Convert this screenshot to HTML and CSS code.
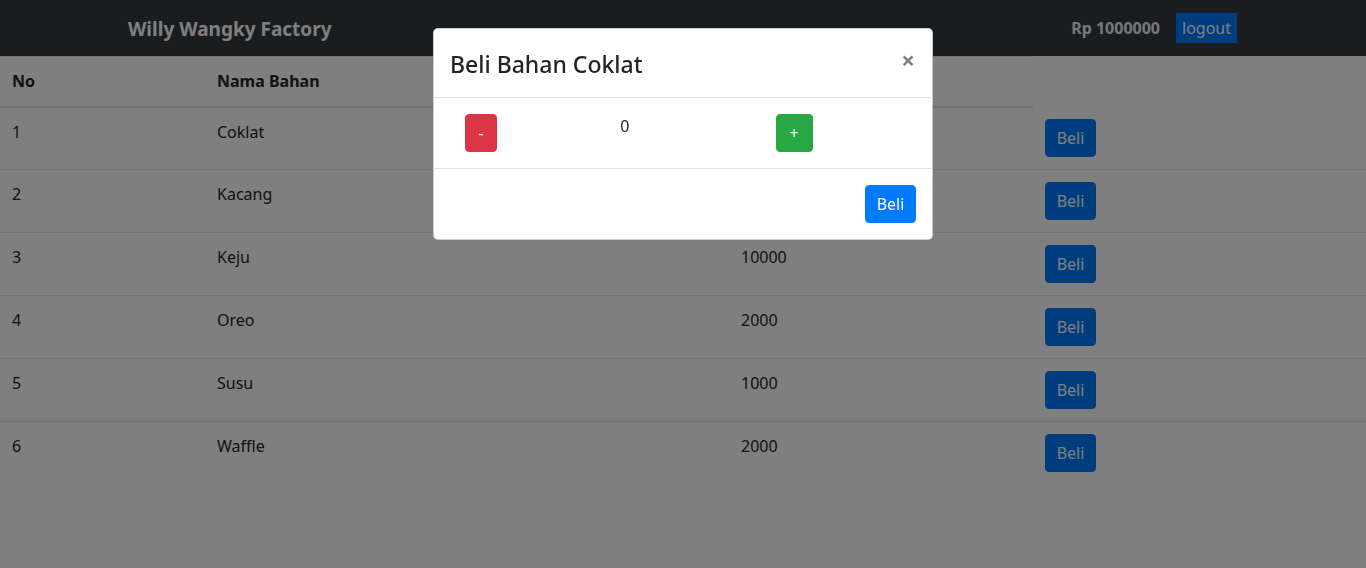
FILE: index.html
```html
<!DOCTYPE html>
<html lang="id">
<head>
<meta charset="utf-8">
<title>Willy Wangky Factory</title>
<link rel="stylesheet" href="styles.css">
</head>
<body>
<nav class="navbar">
  <a class="brand" href="#">Willy Wangky Factory</a>
  <div class="nav-right">
    <span class="saldo">Rp 1000000</span>
    <button class="btn-logout">logout</button>
  </div>
</nav>
<table class="table">
  <colgroup>
    <col class="c1"><col class="c2"><col class="c3"><col class="c4">
  </colgroup>
  <thead>
    <tr><th>No</th><th>Nama Bahan</th><th>Harga</th></tr>
  </thead>
  <tbody>
    <tr><td>1</td><td>Coklat</td><td>5000</td><td><button class="btn btn-primary">Beli</button></td></tr>
    <tr><td>2</td><td>Kacang</td><td>3000</td><td><button class="btn btn-primary">Beli</button></td></tr>
    <tr><td>3</td><td>Keju</td><td>10000</td><td><button class="btn btn-primary">Beli</button></td></tr>
    <tr><td>4</td><td>Oreo</td><td>2000</td><td><button class="btn btn-primary">Beli</button></td></tr>
    <tr><td>5</td><td>Susu</td><td>1000</td><td><button class="btn btn-primary">Beli</button></td></tr>
    <tr><td>6</td><td>Waffle</td><td>2000</td><td><button class="btn btn-primary">Beli</button></td></tr>
  </tbody>
</table>
<div class="backdrop"></div>
<div class="modal">
  <div class="modal-content">
    <div class="modal-header">
      <h4 class="modal-title">Beli Bahan Coklat</h4>
      <button class="close">&times;</button>
    </div>
    <div class="modal-body">
      <div class="row">
        <div class="col"><button class="btn btn-danger">-</button></div>
        <div class="col"><span class="qty">0</span></div>
        <div class="col"><button class="btn btn-success">+</button></div>
      </div>
    </div>
    <div class="modal-footer">
      <button class="btn btn-primary btn-footer">Beli</button>
    </div>
  </div>
</div>
</body>
</html>
```
FILE: styles.css
```css
* { box-sizing: border-box; }
html, body { margin: 0; padding: 0; }
body {
  font-family: "Noto Sans", "Open Sans", "Liberation Sans", sans-serif;
  font-size: 16px;
  line-height: 1.5;
  color: #212529;
  background: #fff;
  height: 568px;
  overflow: hidden;
}
.navbar {
  height: 56px;
  background: #343a40;
  display: flex;
  align-items: center;
  justify-content: space-between;
  padding: 0 129px 0 128px;
}
.brand {
  color: #fff;
  font-weight: 700;
  font-size: 19px;
  text-decoration: none;
  line-height: 30px;
  margin-top: 2px;
}
.nav-right { display: flex; align-items: center; gap: 15px; }
.saldo {
  color: #fff;
  font-weight: 700;
  font-size: 16px;
  opacity: 0.92;
}
.btn-logout {
  font-family: inherit;
  font-size: 16px;
  background: #007bff;
  color: #fff;
  border: 1px solid #007bff;
  border-radius: 0;
  height: 30px;
  padding: 0 5px;
  line-height: 26px;
  margin: 0 0 1px 1px;
}
.table {
  width: 100%;
  border-collapse: collapse;
}
.c1 { width: 205px; }
.c2 { width: 524px; }
.c3 { width: 304px; }
.table th, .table td {
  padding: 12px;
  text-align: left;
  vertical-align: top;
  line-height: 24px;
}
.table th {
  padding-bottom: 13px;
  border-top: 1px solid #dee2e6;
  border-bottom: 2px solid #dee2e6;
  font-weight: 700;
}
.table tbody tr + tr td { border-top: 1px solid #dee2e6; }
.btn {
  font-family: inherit;
  display: inline-block;
  font-size: 16px;
  line-height: 24px;
  padding: 6px 10px;
  border: 1px solid transparent;
  border-radius: 4px;
  color: #fff;
  height: 38px;
}
.btn-primary { background: #007bff; border-color: #007bff; width: 51px; padding: 6px 0; text-align: center; }
.btn-danger { background: #dc3545; border-color: #dc3545; width: 32px; padding: 6px 0; text-align: center; }
.btn-success { background: #28a745; border-color: #28a745; width: 37px; padding: 6px 0; text-align: center; }
.backdrop {
  position: fixed;
  inset: 0;
  background: rgba(0, 0, 0, 0.5);
}
.modal {
  position: fixed;
  top: 28px;
  left: 433px;
  width: 500px;
}
.modal-content {
  background: #fff;
  border: 1px solid rgba(0, 0, 0, 0.2);
  border-radius: 5px;
}
.modal-header {
  display: flex;
  align-items: flex-start;
  justify-content: space-between;
  padding: 16px;
  border-bottom: 1px solid #dee2e6;
}
.modal-title {
  margin: 0;
  font-size: 23px;
  font-weight: 500;
  line-height: 36px;
  padding-top: 1px;
  margin-bottom: -1px;
}
.close {
  background: none;
  border: 0;
  font-family: inherit;
  font-size: 24px;
  font-weight: 700;
  line-height: 1;
  color: #000;
  opacity: 0.5;
  padding: 19px 17px 13px 16px;
  margin: -16px -16px -16px auto;
}
.modal-body { padding: 16px; }
.row { display: flex; }
.col { flex: 1 1 0; padding: 0 15px; }
.qty { display: block; line-height: 24px; }
.modal-footer {
  display: flex;
  justify-content: flex-end;
  padding: 12px;
  border-top: 1px solid #dee2e6;
}
.btn-footer { margin: 4px; }
```
